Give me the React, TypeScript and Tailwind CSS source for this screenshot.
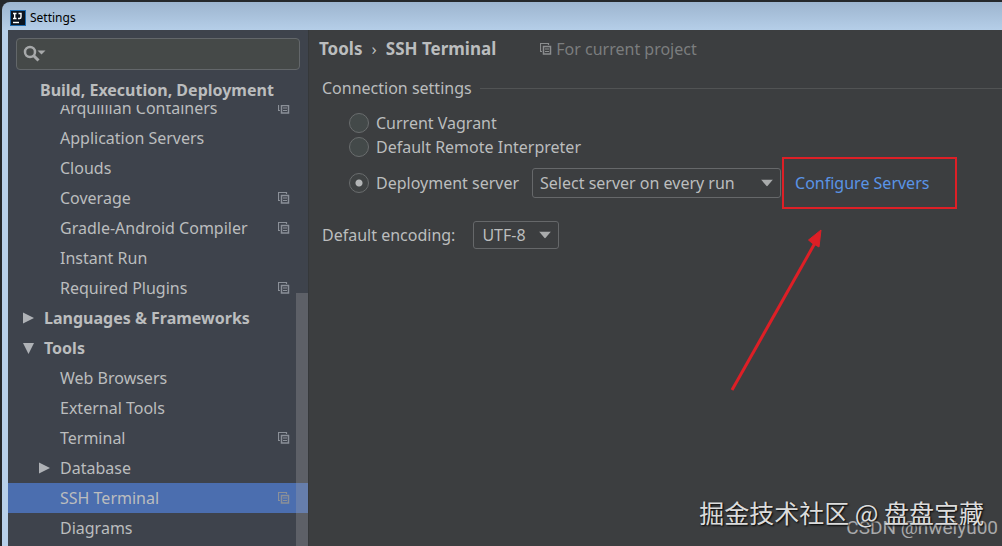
import { useState } from 'react';

type TreeItem = {
  label: string;
  level: 0 | 1;
  arrow?: 'right' | 'down';
  project?: boolean;
};

const treeItems: TreeItem[] = [
  { label: 'Arquillian Containers', level: 1, project: true },
  { label: 'Application Servers', level: 1 },
  { label: 'Clouds', level: 1 },
  { label: 'Coverage', level: 1, project: true },
  { label: 'Gradle-Android Compiler', level: 1, project: true },
  { label: 'Instant Run', level: 1 },
  { label: 'Required Plugins', level: 1, project: true },
  { label: 'Languages & Frameworks', level: 0, arrow: 'right' },
  { label: 'Tools', level: 0, arrow: 'down' },
  { label: 'Web Browsers', level: 1 },
  { label: 'External Tools', level: 1 },
  { label: 'Terminal', level: 1, project: true },
  { label: 'Database', level: 1, arrow: 'right' },
  { label: 'SSH Terminal', level: 1, project: true },
  { label: 'Diagrams', level: 1 },
];

const radioClass =
  'h-5 w-5 shrink-0 appearance-none rounded-full border border-[#6a6d6e] bg-[#434949] checked:bg-[#3f4243] checked:bg-[radial-gradient(circle,#b4b6b7_0_3px,transparent_4px)]';

const ProjectIcon = () => (
  <svg width="12" height="12" viewBox="0 0 12 12" fill="none" stroke="currentColor" className="shrink-0">
    <path d="M2 8.5H.5V.5h8V2" strokeWidth="1.2" />
    <path d="M3.500 3.500h7v7.500h-7z" strokeWidth="1.5" />
    <path d="M5 6h4M5 8.500h4" strokeWidth="1.2" />
  </svg>
);

const TreeArrow = ({ direction }: { direction?: 'right' | 'down' }) => (
  <svg width="11" height="12" viewBox="0 0 11 12" fill="#afb2b6" className="shrink-0">
    {direction === 'right' && <path d="M0 .5 11 6 0 11.5z" />}
    {direction === 'down' && <path d="M0 1h11L5.5 12z" />}
  </svg>
);

const DropArrow = () => (
  <svg
    width="12"
    height="7"
    viewBox="0 0 12 7"
    fill="#a9abac"
    className="pointer-events-none absolute right-2 top-1/2 -translate-y-1/2"
  >
    <path d="M0 0h12L6 7z" />
  </svg>
);

const TitleBar = () => (
  <header className="flex h-7 shrink-0 items-center gap-1 rounded-tl-lg bg-gradient-to-b from-[#9db5cf] to-[#b5cee8] pl-2 pt-1">
    <svg width="16" height="16" viewBox="0 0 16 16">
      <rect width="16" height="16" fill="#1f6bb0" />
      <rect x="1" y="1" width="14" height="14" fill="#0b1420" />
      <path d="M3 3.500h3.500M4.700 3.500v5M3 8.500h3.500M8.500 3.500H11v3.500q0 1.500-1.500 1.500H8" stroke="#fff" strokeWidth="1.4" fill="none" />
      <path d="M3 12.5h6" stroke="#fff" strokeWidth="1.4" />
    </svg>
    <h1 className="text-xs text-black">Settings</h1>
  </header>
);

const Sidebar = () => {
  const [selected, setSelected] = useState('SSH Terminal');

  return (
    <aside className="relative flex w-[300px] shrink-0 flex-col overflow-hidden bg-[#3e434c]">
      <div className="px-2 pt-2">
        <label className="flex h-8 items-center rounded border border-[#63676a] bg-[#454948] pl-[5px]">
          <svg width="24" height="18" viewBox="0 0 24 18" fill="none" className="shrink-0">
            <circle cx="8" cy="7" r="5" stroke="#a7a9aa" strokeWidth="2.5" />
            <path d="m11.5 10.500 5 5" stroke="#a7a9aa" strokeWidth="3" />
            <path d="M15.500 5.500h8l-4 4z" fill="#a7a9aa" />
          </svg>
          <input type="text" aria-label="Search settings" className="min-w-0 flex-1 bg-transparent px-1 outline-none" />
        </label>
      </div>
      <h2 className="mt-[5px] h-[30px] shrink-0 pl-8 font-bold leading-[30px]">Build, Execution, Deployment</h2>
      <nav className="min-h-0 flex-1 overflow-hidden">
        <ul className="-mt-3">
          {treeItems.map((item) => (
            <li key={item.label}>
              <button
                type="button"
                onClick={() => setSelected(item.label)}
                className={`flex h-[30px] w-full items-center gap-[10px] pr-[18px] text-left ${
                  item.level === 0 ? 'pl-[15px] font-bold' : 'pl-[31px]'
                } ${item.label === selected ? 'bg-[#4b6eaf]' : ''}`}
              >
                <TreeArrow direction={item.arrow} />
                <span className="flex-1">{item.label}</span>
                {item.project && (
                  <span className="text-[#8b9098]">
                    <ProjectIcon />
                  </span>
                )}
              </button>
            </li>
          ))}
        </ul>
      </nav>
      {/* Scrollbar thumb */}
      <div className="absolute bottom-0 right-0 top-[263px] w-3 bg-[#a6a6a6]/30" />
    </aside>
  );
};

const SshTerminalPage = () => {
  const [target, setTarget] = useState('server');

  return (
    <main className="min-w-0 flex-1 border-l border-[#35383a] bg-[#3c3e40] pl-[10px] pt-[7px]">
      <div className="flex h-6 items-center text-[17px] font-bold">
        <span>Tools</span>
        <span className="mx-[9px] font-normal">›</span>
        <span>SSH Terminal</span>
        <span className="ml-11 flex items-center gap-1 text-base font-normal text-[#7b7d7e]">
          <span className="text-[#8b8d8e]">
            <ProjectIcon />
          </span>
          For current project
        </span>
      </div>

      <fieldset className="ml-[3px] mt-[15px]">
        <div className="flex h-6 items-center gap-2">
          <span>Connection settings</span>
          <span className="h-px flex-1 bg-[#515354]" />
        </div>
        <div className="mt-[11px] pl-[27px]">
          <label className="flex h-6 items-center gap-[7px]">
            <input type="radio" name="target" className={radioClass} checked={target === 'vagrant'} onChange={() => setTarget('vagrant')} />
            Current Vagrant
          </label>
          <label className="flex h-6 items-center gap-[7px]">
            <input type="radio" name="target" className={radioClass} checked={target === 'remote'} onChange={() => setTarget('remote')} />
            Default Remote Interpreter
          </label>
          <div className="mt-2 flex h-8 items-center">
            <label className="flex items-center gap-[7px]">
              <input type="radio" name="target" className={radioClass} checked={target === 'server'} onChange={() => setTarget('server')} />
              Deployment server
            </label>
            <div className="relative ml-[13px]">
              <select
                aria-label="Deployment server"
                className="h-[30px] w-[249px] appearance-none rounded-[3px] border border-[#66686a] bg-[#3c3e40] pl-[7px]"
              >
                <option>Select server on every run</option>
              </select>
              <DropArrow />
            </div>
            <div className="relative ml-[14px]">
              <a href="#servers" className="text-[#5a94e6]">
                Configure Servers
              </a>
              {/* Highlight frame with its pointer */}
              <div className="pointer-events-none absolute -left-[13px] -right-7 -top-[14px] h-[52px] border-2 border-[#dd1f26]" />
              <svg
                width="94"
                height="164"
                viewBox="0 0 94 164"
                className="pointer-events-none absolute -left-[65px] top-[58px]"
              >
                <path d="M2 161 85 14" stroke="#dd1f26" strokeWidth="3" />
                <path d="M91 1 78.500 11 82 14 89 18z" fill="#dd1f26" stroke="#dd1f26" />
              </svg>
            </div>
          </div>
        </div>
      </fieldset>

      <div className="ml-[3px] mt-[22px] flex items-center">
        <label htmlFor="encoding">Default encoding:</label>
        <div className="relative ml-[18px]">
          <select
            id="encoding"
            className="h-7 w-[86px] appearance-none rounded-[3px] border border-[#66686a] bg-[#3c3e40] pl-2"
          >
            <option>UTF-8</option>
          </select>
          <DropArrow />
        </div>
      </div>
    </main>
  );
};

const App = () => (
  <div className="relative flex h-screen flex-col overflow-hidden bg-[#25282b] pl-[2px] pt-[2px] font-['Noto_Sans',sans-serif] text-base text-[#bbbdbe]">
    <TitleBar />
    <div className="flex min-h-0 flex-1 border-l-[6px] border-[#b8d0ea]">
      <Sidebar />
      <SshTerminalPage />
    </div>

    {/* Watermarks */}
    <p className="absolute bottom-1 right-1 font-[Roboto,sans-serif] text-[19px] leading-7 text-[#a9aaab]">
      CSDN @hweiyu00
    </p>
    <p className="absolute bottom-[18px] right-[18px] font-['Noto_Sans_CJK_SC',sans-serif] text-[25px] leading-8 text-[#dcdcdc] [text-shadow:1px_1px_2px_#000]">
      掘金技术社区 @ 盘盘宝藏
    </p>
  </div>
);

export default App;
